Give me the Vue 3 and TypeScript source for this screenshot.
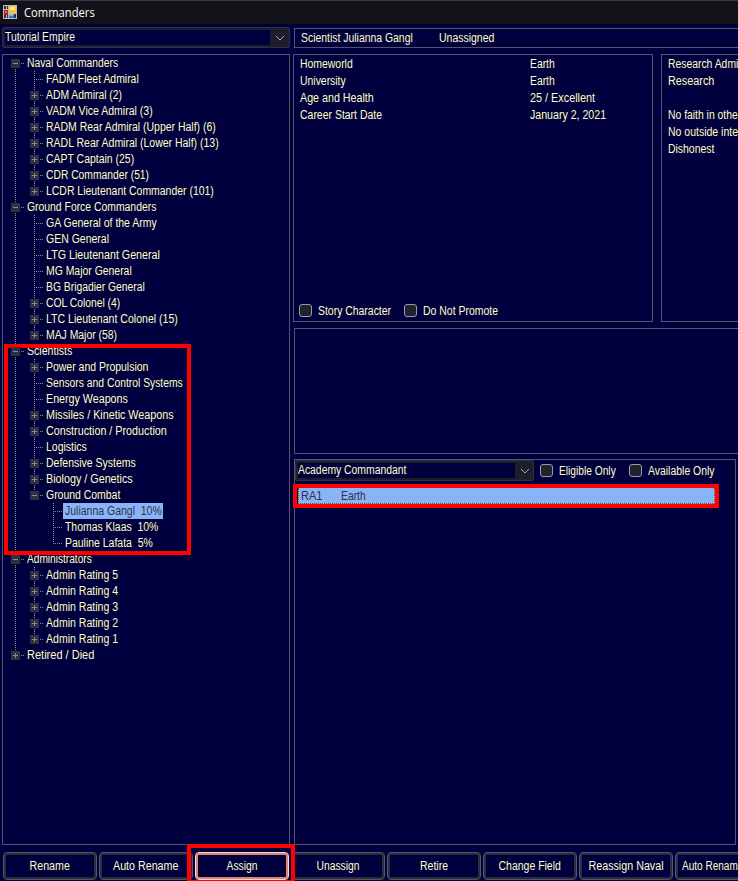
<script setup lang="ts">
import type { Directive } from 'vue'

interface TreeNode {
  text: string
  depth: 0 | 1 | 2
  width: number
  glyph?: '+' | '-'
  last?: boolean
  selected?: boolean
}

const vFit: Directive<HTMLElement, number> = {
  mounted(el, { value }) {
    const natural = el.offsetWidth
    if (natural > 0) el.style.transform = `scaleX(${value / natural})`
  },
}

const nodes: TreeNode[] = [
  { text: 'Naval Commanders', depth: 0, width: 91, glyph: '-' },
  { text: 'FADM Fleet Admiral', depth: 1, width: 93 },
  { text: 'ADM Admiral (2)', depth: 1, width: 76, glyph: '+' },
  { text: 'VADM Vice Admiral (3)', depth: 1, width: 107, glyph: '+' },
  { text: 'RADM Rear Admiral (Upper Half) (6)', depth: 1, width: 170, glyph: '+' },
  { text: 'RADL Rear Admiral (Lower Half) (13)', depth: 1, width: 173, glyph: '+' },
  { text: 'CAPT Captain (25)', depth: 1, width: 88, glyph: '+' },
  { text: 'CDR Commander (51)', depth: 1, width: 103, glyph: '+' },
  { text: 'LCDR Lieutenant Commander (101)', depth: 1, width: 168, glyph: '+', last: true },
  { text: 'Ground Force Commanders', depth: 0, width: 129, glyph: '-' },
  { text: 'GA General of the Army', depth: 1, width: 111 },
  { text: 'GEN General', depth: 1, width: 63 },
  { text: 'LTG Lieutenant General', depth: 1, width: 114 },
  { text: 'MG Major General', depth: 1, width: 86 },
  { text: 'BG Brigadier General', depth: 1, width: 99 },
  { text: 'COL Colonel (4)', depth: 1, width: 74, glyph: '+' },
  { text: 'LTC Lieutenant Colonel (15)', depth: 1, width: 132, glyph: '+' },
  { text: 'MAJ Major (58)', depth: 1, width: 71, glyph: '+', last: true },
  { text: 'Scientists', depth: 0, width: 45, glyph: '-' },
  { text: 'Power and Propulsion', depth: 1, width: 102, glyph: '+' },
  { text: 'Sensors and Control Systems', depth: 1, width: 137 },
  { text: 'Energy Weapons', depth: 1, width: 82 },
  { text: 'Missiles / Kinetic Weapons', depth: 1, width: 128, glyph: '+' },
  { text: 'Construction / Production', depth: 1, width: 121, glyph: '+' },
  { text: 'Logistics', depth: 1, width: 41 },
  { text: 'Defensive Systems', depth: 1, width: 90, glyph: '+' },
  { text: 'Biology / Genetics', depth: 1, width: 87, glyph: '+' },
  { text: 'Ground Combat', depth: 1, width: 74, glyph: '-', last: true },
  { text: 'Julianna Gangl  10%', depth: 2, width: 97, selected: true },
  { text: 'Thomas Klaas  10%', depth: 2, width: 93 },
  { text: 'Pauline Lafata  5%', depth: 2, width: 88, last: true },
  { text: 'Administrators', depth: 0, width: 65, glyph: '-' },
  { text: 'Admin Rating 5', depth: 1, width: 72, glyph: '+' },
  { text: 'Admin Rating 4', depth: 1, width: 72, glyph: '+' },
  { text: 'Admin Rating 3', depth: 1, width: 72, glyph: '+' },
  { text: 'Admin Rating 2', depth: 1, width: 72, glyph: '+' },
  { text: 'Admin Rating 1', depth: 1, width: 72, glyph: '+', last: true },
  { text: 'Retired / Died', depth: 0, width: 67, glyph: '+', last: true },
]

const facts = [
  { label: 'Homeworld', lw: 53, value: 'Earth', vw: 25 },
  { label: 'University', lw: 46, value: 'Earth', vw: 25 },
  { label: 'Age and Health', lw: 74, value: '25 / Excellent', vw: 65 },
  { label: 'Career Start Date', lw: 82, value: 'January 2, 2021', vw: 76 },
]

const traits = [
  { text: 'Research Admi', width: 70 },
  { text: 'Research', width: 46 },
  { text: '', width: 0 },
  { text: 'No faith in othe', width: 70 },
  { text: 'No outside inte', width: 70 },
  { text: 'Dishonest', width: 46 },
]

const actions = [
  { text: 'Rename', width: 40 },
  { text: 'Auto Rename', width: 65 },
  { text: 'Assign', width: 31, focused: true },
  { text: 'Unassign', width: 43 },
  { text: 'Retire', width: 28 },
  { text: 'Change Field', width: 62 },
  { text: 'Reassign Naval', width: 75 },
  { text: 'Auto Renam', width: 56, cut: true },
]
</script>

<template>
  <div class="window">
    <header class="titlebar">
      <svg class="app-icon" width="14" height="14" viewBox="0 0 14 14" shape-rendering="crispEdges">
        <rect width="14" height="14" fill="#b9bcc4" />
        <path d="M1 1h2v3H1zM4 1h1v3H4zM1 10h2v3H1zM4 10h1v3H4zM11 9h2v4h-2z" fill="#30323a" />
        <path d="M1 5h4v5H1z" fill="#b52223" /><path d="M2 6h2v2H2z" fill="#ef6658" />
        <path d="M6 1h7v7H6z" fill="#ffc02d" /><path d="M7 2h5v3H7z" fill="#ffe28b" />
        <path d="M6 10h5v3H6z" fill="#3677e4" /><path d="M7 10h3v1H7z" fill="#7db4ff" />
      </svg>
      <span v-fit="71" class="t title">Commanders</span>
    </header>

    <main class="body">
      <section class="left">
        <div class="combo empire">
          <div class="field"><span v-fit="70" class="t">Tutorial Empire</span></div>
          <svg width="18" height="18" viewBox="0 0 18 18"><path d="M5 7l4 4 4-4" fill="none" stroke="#a5a5b0" /></svg>
        </div>
        <div class="panel tree">
          <div v-for="(n, i) in nodes" :key="i" class="node" :class="['d' + n.depth, { last: n.last }]">
            <span v-if="n.depth > 0" class="rail root-rail"></span>
            <span v-if="n.depth > 1" class="rail gap-rail"></span>
            <span class="rail own" :class="{ first: i === 0, end: n.last }">
              <svg v-if="n.glyph" class="box" width="9" height="9" viewBox="0 0 9 9" shape-rendering="crispEdges">
                <rect width="9" height="9" fill="#30303f" />
                <path :d="n.glyph === '+' ? 'M2 4h5v1H2zM4 2h1v5H4z' : 'M2 4h5v1H2z'" fill="#85879b" />
              </svg>
            </span>
            <span class="name" :class="{ selected: n.selected }"><span v-fit="n.width" class="t">{{ n.text }}</span></span>
          </div>
        </div>
      </section>

      <section class="right">
        <div class="panel heading">
          <span class="who"><span v-fit="112" class="t">Scientist Julianna Gangl</span></span>
          <span v-fit="55" class="t">Unassigned</span>
        </div>
        <div class="details">
          <div class="panel info">
            <div>
              <div v-for="f in facts" :key="f.label" class="fact">
                <span class="key"><span v-fit="f.lw" class="t">{{ f.label }}</span></span>
                <span v-fit="f.vw" class="t">{{ f.value }}</span>
              </div>
            </div>
            <div class="checks">
              <label class="check story"><i></i><span v-fit="73" class="t">Story Character</span></label>
              <label class="check"><i></i><span v-fit="75" class="t">Do Not Promote</span></label>
            </div>
          </div>
          <div class="panel traits">
            <div v-for="(t, i) in traits" :key="i" class="fact"><span v-fit="t.width" class="t">{{ t.text }}</span></div>
          </div>
        </div>
        <div class="panel notes"></div>
        <div class="panel postings">
          <div class="filters">
            <div class="combo role">
              <div class="field"><span v-fit="108" class="t">Academy Commandant</span></div>
              <svg width="18" height="18" viewBox="0 0 18 18"><path d="M5 7l4 4 4-4" fill="none" stroke="#a5a5b0" /></svg>
            </div>
            <label class="check eligible"><i></i><span v-fit="57" class="t">Eligible Only</span></label>
            <label class="check"><i></i><span v-fit="67" class="t">Available Only</span></label>
          </div>
          <div class="posting">
            <span class="code"><span v-fit="21" class="t">RA1</span></span>
            <span v-fit="25" class="t">Earth</span>
          </div>
        </div>
      </section>
    </main>

    <footer class="actions">
      <button v-for="(a, i) in actions" :key="i" :class="{ focused: a.focused, cut: a.cut }">
        <span v-fit="a.width" class="t">{{ a.text }}</span>
      </button>
    </footer>

    <div class="mark mark-scientists"></div>
    <div class="mark mark-posting"></div>
    <div class="mark mark-assign"></div>
  </div>
</template>

<style>
body { margin: 0; background: #00003e; }
</style>

<style scoped>
* { box-sizing: border-box; }
.window {
  position: relative; width: 738px; height: 881px; overflow: hidden;
  display: flex; flex-direction: column; background: #00003e; color: #ffffc4;
  font: 12px/16px "Liberation Sans", Arial, sans-serif;
}
.t { display: inline-block; flex: none; white-space: pre; transform-origin: 0 50%; }
.titlebar {
  height: 24px; flex: none; display: flex; align-items: center; padding: 0 0 0 3px; gap: 7px;
  background: #121218; border-top: 1px solid #343748;
}
.app-icon { margin-top: -1px; }
.title { color: #fff; font: 12px/16px "Open Sans", "Noto Sans", sans-serif; }
.body { height: 821px; flex: none; display: flex; gap: 4px; padding-left: 2px; }
.left { width: 288px; flex: none; padding-top: 3px; }
.right { width: 460px; flex: none; padding-top: 4px; }
.panel { border: 1px solid #52566b; flex: none; }
.combo { display: flex; align-items: center; background: #1d1d2c; border: 1px solid #30303f; border-radius: 2px; }
.combo svg { flex: none; }
.field { background: #00003e; height: 15px; display: flex; align-items: center; flex: none; }
.empire { height: 21px; gap: 1px; padding-left: 2px; }
.empire .field { width: 265px; padding-bottom: 1px; }
.tree { height: 791px; margin-top: 6px; padding-left: 8px; }
.node { display: flex; height: 16px; }
.rail { position: relative; width: 19px; flex: none; }
.rail::before {
  content: ''; position: absolute; left: 4px; top: 0; width: 1px; height: 16px;
  background: repeating-linear-gradient(to bottom, #8c8ea6 0 1px, transparent 1px 2px);
}
.own { width: 16px; }
.own::after {
  content: ''; position: absolute; left: 4px; top: 8px; width: 9px; height: 1px;
  background: repeating-linear-gradient(to right, #8c8ea6 0 1px, transparent 1px 2px);
}
.first::before { top: 8px; height: 8px; }
.end::before { height: 9px; }
.gap-rail::before { display: none; }
.box { position: absolute; left: 0; top: 4px; z-index: 1; }
.name { height: 16px; width: 250px; }
.d2 .name { width: 100px; margin-left: -2px; padding-left: 2px; }
.selected { background: #8ab4f8; color: #30304a; }
.heading { display: flex; height: 20px; align-items: center; padding-left: 6px; }
.who { width: 138px; }
.details { display: flex; gap: 8px; height: 268px; margin: 6px 0 0 -1px; }
.info { width: 360px; padding: 0 0 2px 6px; display: flex; flex-direction: column; justify-content: space-between; }
.fact { display: flex; height: 17px; align-items: center; }
.key { width: 230px; }
.checks { display: flex; margin-left: -1px; }
.check { display: flex; align-items: center; gap: 6px; }
.check i { width: 13px; height: 13px; flex: none; border: 1px solid #9a9ba8; border-radius: 3px; background: #22222f; }
.checks .check i { margin-top: -1px; }
.story { width: 105px; }
.traits { width: 120px; padding: 0 0 0 6px; }
.notes { height: 126px; margin-top: 6px; }
.postings { width: 442px; height: 386px; margin-top: 5px; }
.filters { display: flex; height: 22px; }
.filters .check i { margin-top: -1px; }
.role { width: 239px; height: 21px; gap: 1px; padding-left: 2px; }
.role .field { width: 217px; padding-bottom: 1px; }
.eligible { width: 89px; margin-left: 6px; }
.posting {
  display: flex; align-items: center; width: 417px; height: 16px; margin: 6px 0 0 3px; padding-left: 2px;
  background: #8ab4f8; color: #30304a; border: 1px dotted #75501f; border-top: 0;
}
.code { width: 40px; }
.actions { display: flex; gap: 2px; padding: 7px 0 0 3px; }
button {
  display: flex; align-items: center; justify-content: center; width: 94px; height: 28px; flex: none;
  padding: 0; font: inherit; color: inherit; background: #00003e; border: 1px solid #55566a; border-radius: 4px;
  box-shadow: inset 0 0 0 2px #2b2c3d;
}
button .t { transform-origin: 50% 50%; }
.cut { justify-content: flex-start; padding-left: 6px; }
.cut .t { transform-origin: 0 50%; }
.focused { border-color: #f6dcd6; box-shadow: inset 0 0 0 2px #e0846f; }
.mark { position: absolute; border: 4px solid #f00; }
.mark-scientists { left: 4px; top: 344px; width: 187px; height: 211px; }
.mark-posting { left: 293px; top: 484px; width: 426px; height: 24px; }
.mark-assign { left: 187px; top: 844px; width: 108px; height: 40px; }
</style>
